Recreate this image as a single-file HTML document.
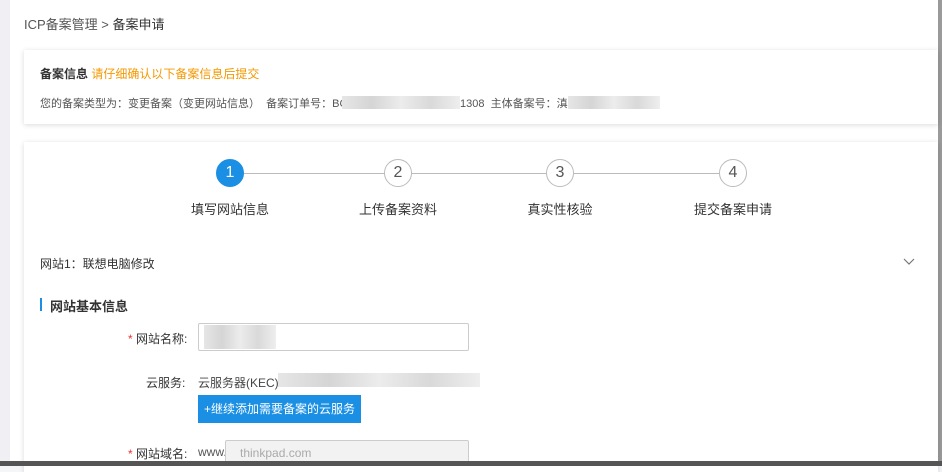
<!DOCTYPE html>
<html><head><meta charset="utf-8"><style>
*{margin:0;padding:0;box-sizing:border-box}
body{width:942px;height:466px;overflow:hidden;background:#f5f6f8;font-family:"Liberation Sans","Noto Sans CJK SC",sans-serif;position:relative;color:#333}
.lbar{position:absolute;left:0;top:0;width:10px;height:466px;background:#f0f0f4}
.main{position:absolute;left:10px;top:0;width:928px;height:466px;background:#fff}
.rbar{position:absolute;left:938px;top:0;width:4px;height:466px;background:#9a9a9a}
.bot{position:absolute;left:0;top:461px;width:942px;height:5px;background:#555}
.crumb{position:absolute;left:24px;top:14px;font-size:13px;color:#555}
.crumb b{font-weight:normal;color:#333}
.card{position:absolute;left:24px;background:#fff;box-shadow:0 1px 5px rgba(0,0,0,.15)}
.c1{top:50px;width:914px;height:74px}
.c2{top:142px;width:914px;height:330px}
.t{position:absolute;font-size:12px;white-space:nowrap}
.blur{position:absolute;background:linear-gradient(90deg,#e6e6e6,#d5d5d5,#ececec,#d9d9d9,#eee)}
.step{position:absolute;width:28px;height:28px;border-radius:50%;border:1px solid #bbb;background:#fff;text-align:center;line-height:26px;font-size:16px;color:#555}
.line{position:absolute;top:173px;height:1px;background:#bbb}
.lbl{position:absolute;top:199px;font-size:13px;color:#333;width:100px;text-align:center}
.inp{position:absolute;border:1px solid #ccc;background:#fff;border-radius:2px}
</style></head><body>
<div class="lbar"></div><div class="main"></div><div class="rbar"></div>
<div class="crumb">ICP备案管理 &gt; <b>备案申请</b></div>
<div class="card c1"></div>
<div class="t" style="left:40px;top:65px;font-size:12px;font-weight:bold;color:#333">备案信息 <span style="color:#f39800;font-weight:normal">请仔细确认以下备案信息后提交</span></div>
<div class="t" style="left:40px;top:95px;font-size:11px;color:#555">您的备案类型为：变更备案（变更网站信息）&nbsp; 备案订单号：BG\</div>
<div class="blur" style="left:342px;top:96px;width:118px;height:13px"></div>
<div class="t" style="left:460px;top:95px;font-size:11px;color:#555">1308 &nbsp;主体备案号：滇</div>
<div class="blur" style="left:568px;top:96px;width:92px;height:13px"></div>
<div class="card c2"></div>
<div class="line" style="left:243px;width:142px"></div>
<div class="line" style="left:412px;width:135px"></div>
<div class="line" style="left:574px;width:146px"></div>
<div class="step" style="left:216px;top:159px;background:#1a8fe3;border-color:#1a8fe3;color:#fff">1</div>
<div class="step" style="left:384px;top:159px">2</div>
<div class="step" style="left:546px;top:159px">3</div>
<div class="step" style="left:719px;top:159px">4</div>
<div class="lbl" style="left:180px">填写网站信息</div>
<div class="lbl" style="left:348px">上传备案资料</div>
<div class="lbl" style="left:510px">真实性核验</div>
<div class="lbl" style="left:683px">提交备案申请</div>
<div class="t" style="left:40px;top:255px;color:#333">网站1：联想电脑修改</div>
<svg style="position:absolute;left:903px;top:258px" width="12" height="8"><path d="M1 1 L6 6 L11 1" fill="none" stroke="#777" stroke-width="1.2"/></svg>
<div style="position:absolute;left:40px;top:298px;width:2px;height:13px;background:#1a8fe3"></div>
<div class="t" style="left:50px;top:296px;font-size:13px;font-weight:bold">网站基本信息</div>
<div class="t" style="left:128px;top:330px"><span style="color:#e33">*</span> 网站名称:</div>
<div class="inp" style="left:198px;top:323px;width:271px;height:28px"></div>
<div class="blur" style="left:204px;top:325px;width:72px;height:24px"></div>
<div class="t" style="left:146px;top:374px">云服务:</div>
<div class="t" style="left:198px;top:374px;color:#444">云服务器(KEC)-f</div>
<div class="blur" style="left:278px;top:373px;width:202px;height:14px"></div>
<div style="position:absolute;left:198px;top:395px;width:163px;height:28px;background:#1a8fe3;color:#fff;font-size:12px;text-align:center;line-height:28px">+继续添加需要备案的云服务</div>
<div class="t" style="left:128px;top:445px"><span style="color:#e33">*</span> 网站域名:</div>
<div class="t" style="left:198px;top:445px;color:#555">www.</div>
<div class="inp" style="left:225px;top:440px;width:244px;height:26px;background:#f2f2f2"></div>
<div class="t" style="left:240px;top:446px;color:#aaa">thinkpad.com</div>
<div class="bot"></div>
</body></html>
